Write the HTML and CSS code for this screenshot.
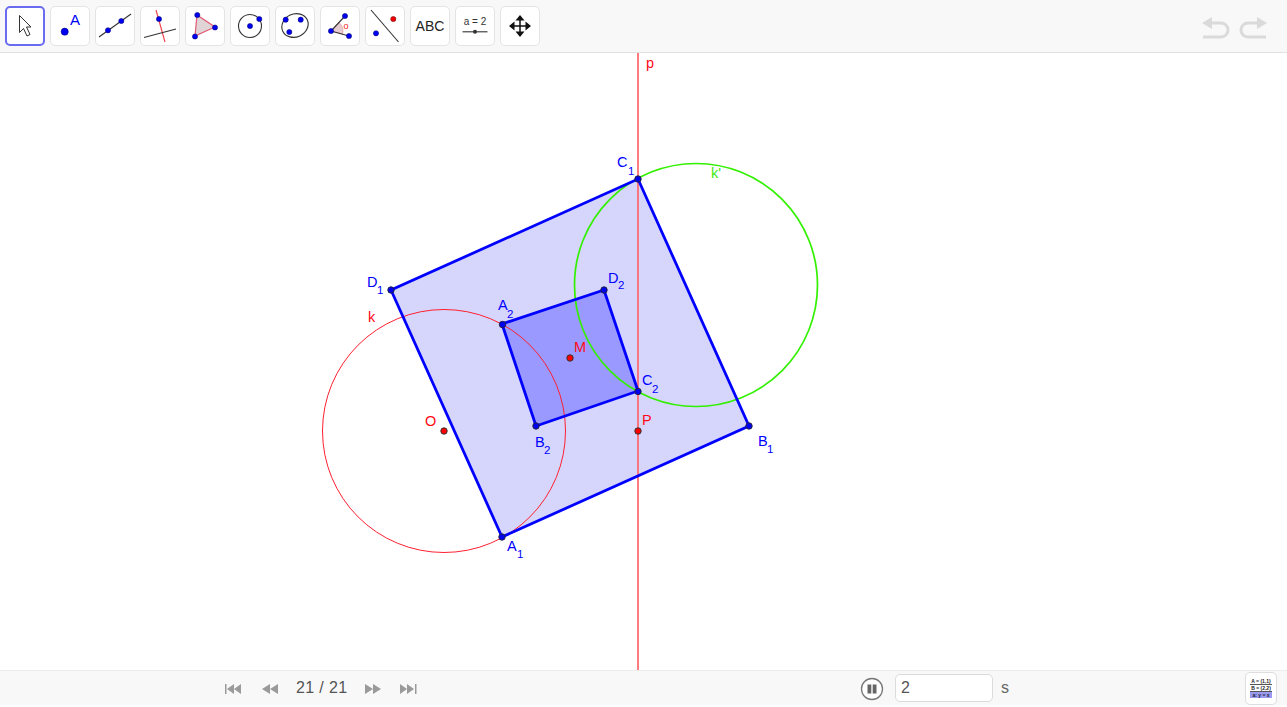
FILE: index.html
```html
<!DOCTYPE html>
<html lang="en">
<head>
<meta charset="utf-8">
<title>Geometry applet</title>
<link rel="stylesheet" href="styles.css">
</head>
<body>
<div class="app">
  <header class="toolbar">
    <div class="tools">
      <button class="tool tool-active"><svg viewBox="5 6 40 40"><path class="cursor" d="M19.500 15.500 31 27h-4.500l3.500 7.500-3 1.500-3.500-7.500-4 4z"/></svg></button>
      <button class="tool"><svg viewBox="50 6 40 40"><circle class="pt" cx="64.700" cy="31.700" r="3.600"/><text class="icon-a" x="70" y="25">A</text></svg></button>
      <button class="tool"><svg viewBox="95 6 40 40"><path class="ink" d="M99 37 131 14"/><circle class="pt" cx="108" cy="30.300" r="2.600"/><circle class="pt" cx="121.300" cy="21" r="2.600"/></svg></button>
      <button class="tool"><svg viewBox="140 6 40 40"><path class="redline" d="M156 10 165 42"/><path class="ink" d="M144 37.500 176 29"/><circle class="pt" cx="159" cy="19" r="2.600"/></svg></button>
      <button class="tool"><svg viewBox="185 6 40 40"><path class="poly" d="M197 15 215 27 195 36z"/><circle class="pt" cx="197.300" cy="15" r="2.600"/><circle class="pt" cx="215" cy="27.500" r="2.600"/><circle class="pt" cx="195" cy="36.500" r="2.600"/></svg></button>
      <button class="tool"><svg viewBox="230 6 40 40"><circle class="ink" cx="250" cy="26" r="11.500"/><circle class="pt" cx="250" cy="26" r="2.600"/><circle class="pt" cx="259.300" cy="19" r="2.600"/></svg></button>
      <button class="tool"><svg viewBox="275 6 40 40"><ellipse class="ink" cx="295" cy="25.500" rx="13.500" ry="11.500" transform="rotate(-25 295 25.500)"/><circle class="pt" cx="285.700" cy="19.700" r="2.600"/><circle class="pt" cx="300.700" cy="19.700" r="2.600"/><circle class="pt" cx="289.300" cy="32" r="2.600"/></svg></button>
      <button class="tool"><svg viewBox="320 6 40 40"><path class="wedge" d="M331 31 339 22.500a11.500 11.500 0 0 1 3.500 11.700z"/><path class="ink" d="M345 16 331 31 349 36"/><circle class="pt" cx="345" cy="16" r="2.600"/><circle class="pt" cx="331" cy="31" r="2.600"/><circle class="pt" cx="349" cy="36" r="2.600"/><text class="icon-o" x="343.500" y="29">o</text></svg></button>
      <button class="tool"><svg viewBox="365 6 40 40"><path class="ink" d="M371 10 398.500 42"/><circle class="pt-red" cx="393.300" cy="19" r="2.600"/><circle class="pt" cx="376" cy="33.300" r="2.600"/></svg></button>
      <button class="tool tool-text">ABC</button>
      <button class="tool"><svg viewBox="455 6 40 40"><text class="icon-slider" x="475" y="25">a = 2</text><path class="ink" d="M462.500 31.800H487.500"/><circle class="dot" cx="475" cy="31.800" r="2"/></svg></button>
      <button class="tool"><svg viewBox="500 6 40 40"><path class="ink-bold" d="M510 26H530M520 16V36"/><path class="fillblack" d="M520 15l-4.500 5.500h9zM520 37l-4.500-5.500h9zM509 26l5.500-4.500v9zM531 26l-5.500-4.500v9z"/></svg></button>
    </div>
    <div class="history">
      <svg class="hist-icon" viewBox="0 0 28 22"><path class="hist" d="M8 6H19a7 7 0 0 1 0 14H1"/><path class="hist-fill" d="M0 6 10 0v12z"/></svg>
      <svg class="hist-icon" viewBox="0 0 28 22"><path class="hist" d="M20 6H9a7 7 0 0 0 0 14H27"/><path class="hist-fill" d="M28 6 18 0v12z"/></svg>
    </div>
  </header>

  <main class="canvas">
    <svg class="board" viewBox="0 53 1287 617">
      <polygon class="square-outer" points="502,537 749,426 638,179 391,290"/>
      <polygon class="square-inner" points="502,324 536,426 638,391 604,290"/>
      <circle class="circle-k" cx="444" cy="431" r="121.500"/>
      <circle class="circle-k2" cx="696" cy="285" r="121.500"/>
      <line class="line-p" x1="638" y1="53" x2="638" y2="670"/>
      <polygon class="edge-outer" points="502,537 749,426 638,179 391,290"/>
      <polygon class="edge-inner" points="502,324 536,426 638,391 604,290"/>

      <circle class="node" cx="502" cy="537" r="3.200"/>
      <circle class="node" cx="749" cy="426" r="3.200"/>
      <circle class="node" cx="638" cy="179" r="3.200"/>
      <circle class="node" cx="391" cy="290" r="3.200"/>
      <circle class="node" cx="502.500" cy="324.500" r="3.200"/>
      <circle class="node" cx="536" cy="426" r="3.200"/>
      <circle class="node" cx="638" cy="391.500" r="3.200"/>
      <circle class="node" cx="604" cy="290" r="3.200"/>
      <circle class="node-red" cx="570" cy="358" r="3.200"/>
      <circle class="node-red" cx="444" cy="431" r="3.200"/>
      <circle class="node-red" cx="638" cy="431" r="3.200"/>

      <text class="lbl red" x="646" y="68">p</text>
      <text class="lbl green" x="711" y="178">k'</text>
      <text class="lbl red" x="368" y="322">k</text>
      <text class="lbl red" x="574" y="352">M</text>
      <text class="lbl red" x="425" y="426">O</text>
      <text class="lbl red" x="642" y="425">P</text>

      <text class="lbl blue" x="617" y="167">C</text><text class="sub blue" x="628" y="175">1</text>
      <text class="lbl blue" x="367" y="287">D</text><text class="sub blue" x="377" y="294">1</text>
      <text class="lbl blue" x="498" y="310">A</text><text class="sub blue" x="507" y="318">2</text>
      <text class="lbl blue" x="608" y="283">D</text><text class="sub blue" x="618" y="289">2</text>
      <text class="lbl blue" x="642" y="385">C</text><text class="sub blue" x="652" y="393">2</text>
      <text class="lbl blue" x="535" y="447">B</text><text class="sub blue" x="544" y="454">2</text>
      <text class="lbl blue" x="507" y="551">A</text><text class="sub blue" x="517" y="558">1</text>
      <text class="lbl blue" x="758" y="446">B</text><text class="sub blue" x="767" y="453">1</text>
    </svg>
  </main>

  <footer class="player">
    <div class="nav">
      <svg class="nav-icon" viewBox="0 0 18 10"><path d="M0 0h1.500v10H0zM2 5l7-5v10zM9 5l7-5v10z"/></svg>
      <svg class="nav-icon" viewBox="0 0 18 10"><path d="M1 5l8-5v10zM9 5l8-5v10z"/></svg>
      <span class="counter">21 / 21</span>
      <svg class="nav-icon" viewBox="0 0 18 10"><path d="M1 0l8 5-8 5zM9 0l8 5-8 5z"/></svg>
      <svg class="nav-icon" viewBox="0 0 18 10"><path d="M0 0l7 5-7 5zM7 0l7 5-7 5zM15 0h1.500v10H15z"/></svg>
    </div>
    <div class="play">
      <svg class="pause" viewBox="0 0 24 24"><circle class="pause-ring" cx="12" cy="12" r="10.500"/><rect class="pause-bar" x="7.500" y="7.500" width="3.800" height="9"/><rect class="pause-bar" x="12.700" y="7.500" width="3.800" height="9"/></svg>
      <input class="speed" type="text" value="2">
      <span class="unit">s</span>
    </div>
    <button class="algebra">
      <span class="alg-row">A = (1,1)</span>
      <span class="alg-row alg-rule">B = (2,2)</span>
      <span class="alg-row alg-hl">a: y = x</span>
    </button>
  </footer>
</div>
</body>
</html>
```

FILE: styles.css
```css
* { box-sizing: border-box; }
html, body { margin: 0; height: 100%; background: #fff; overflow: hidden; }
body { font-family: "Liberation Sans", Arial, sans-serif; }

.app { display: flex; flex-direction: column; height: 707px; }

.toolbar {
  flex: 0 0 53px;
  display: flex;
  align-items: flex-start;
  justify-content: space-between;
  padding: 6px 20px 0 5px;
  background: #f8f8f8;
  border-bottom: 1px solid #e1e1e1;
}
.tools { display: flex; gap: 5px; }
.tool {
  width: 40px;
  height: 40px;
  padding: 0;
  background: #fff;
  border: 1px solid #e4e4e4;
  border-radius: 5px;
  display: flex;
  align-items: center;
  justify-content: center;
}
.tool svg { width: 40px; height: 40px; display: block; flex: none; }
.tool-active { border: 2px solid #6b6bf2; }
.tool-text { font: 14px "Liberation Sans", Arial, sans-serif; color: #222; }

.history { display: flex; gap: 9px; padding-top: 11px; }
.hist-icon { width: 28px; height: 22px; display: block; }
.hist { fill: none; stroke: #dadada; stroke-width: 3; }
.hist-fill { fill: #dadada; }

.cursor { fill: #fff; stroke: #333; stroke-width: 1; }
.pt { fill: #0000f0; stroke: #00006a; stroke-width: .5; }
.pt-red { fill: #f00000; stroke: #660000; stroke-width: .5; }
.dot { fill: #333; }
.ink { fill: none; stroke: #333; stroke-width: 1.100; }
.ink-bold { fill: none; stroke: #111; stroke-width: 1.500; }
.fillblack { fill: #111; }
.redline { fill: none; stroke: #f0404a; stroke-width: 1.100; }
.poly { fill: #e0d4d6; stroke: #e05a72; stroke-width: 1.200; }
.wedge { fill: #e6ccd0; stroke: #ea8a90; stroke-width: .6; }
.icon-a { font: 15px "Liberation Sans", Arial, sans-serif; fill: #0000f0; }
.icon-o { font: 9px "Liberation Sans", Arial, sans-serif; fill: #f02020; }
.icon-slider { font: 10px "Liberation Sans", Arial, sans-serif; fill: #333; text-anchor: middle; }

.canvas { flex: 0 0 617px; background: #fff; }
.board { display: block; width: 100%; height: 617px; }
.square-outer { fill: #d6d6fc; }
.square-inner { fill: #9999ff; }
.circle-k { fill: none; stroke: #ff2030; stroke-width: 1; }
.circle-k2 { fill: none; stroke: #33f000; stroke-width: 1.700; }
.line-p { stroke: #ff6468; stroke-width: 1.700; }
.edge-outer { fill: none; stroke: #0000ff; stroke-width: 2.800; }
.edge-inner { fill: none; stroke: #0000ff; stroke-width: 2.800; }
.node { fill: #0000f0; stroke: #222244; stroke-width: 1; }
.node-red { fill: #ff0000; stroke: #333; stroke-width: 1; }
.lbl { font: 14.500px "Liberation Sans", Arial, sans-serif; }
.sub { font: 11.500px "Liberation Sans", Arial, sans-serif; }
.red { fill: #ff0a14; }
.blue { fill: #0000ff; }
.green { fill: #44e811; }

.player {
  flex: 0 0 35px;
  display: flex;
  align-items: center;
  background: #f8f8f8;
  border-top: 1px solid #ececec;
  padding-left: 225px;
}
.nav { display: flex; align-items: center; width: 635px; }
.nav-icon { width: 18px; height: 10px; fill: #9a9a9a; display: block; margin: 2px 18px 0 0; }
.counter { font-size: 16px; color: #555; margin: 0 17px 0 -1px; width: 51px; white-space: nowrap; letter-spacing: .35px; }
.play { display: flex; align-items: center; }
.pause { width: 24px; height: 24px; display: block; margin: 2px 11px 0 0; }
.pause-ring { fill: #fff; stroke: #777; stroke-width: 1.300; }
.pause-bar { fill: #666; }
.speed {
  width: 98px;
  height: 28px;
  padding: 0 5px;
  border: 1px solid #dcdcdc;
  border-radius: 5px;
  background: #fff;
  font: 16px "Liberation Sans", Arial, sans-serif;
  color: #555;
  outline: none;
}
.unit { font-size: 16px; color: #666; margin-left: 8px; }
.algebra {
  margin-left: auto;
  margin-right: 10px;
  width: 32px;
  height: 33px;
  align-self: flex-end;
  padding: 5px 4px 0;
  border: 1px solid #dedede;
  border-radius: 5px;
  background: #fff;
  display: flex;
  flex-direction: column;
  align-items: center;
}
.alg-row { display: block; width: 100%; font-size: 5px; line-height: 6px; color: #222; font-weight: bold; text-align: center; white-space: nowrap; }
.alg-rule { border-top: 1px solid #555; border-bottom: 1px solid #555; }
.alg-hl { background: #9a9af0; color: #223; }
```
